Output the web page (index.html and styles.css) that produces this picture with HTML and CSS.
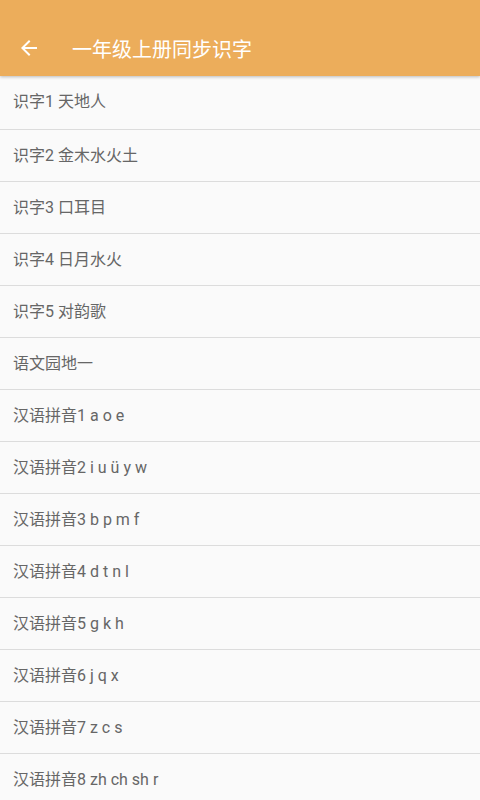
FILE: index.html
```html
<!DOCTYPE html>
<html lang="zh-CN">
<head>
    <meta charset="UTF-8">
    <meta name="viewport" content="width=device-width, initial-scale=1.0">
    <title>一年级上册同步识字</title>
    <link rel="stylesheet" href="styles.css">
</head>
<body>
    <div class="toolbar">
        <svg class="back-icon" viewBox="0 0 24 24" width="24" height="24">
            <path d="M20 11H7.83l5.59-5.59L12 4l-8 8 8 8 1.41-1.41L7.83 13H20v-2z" fill="#fff"/>
        </svg>
        <h1 class="title">一年级上册同步识字</h1>
    </div>
    <ul class="lesson-list">
        <li class="lesson">识字1 天地人</li>
        <li class="lesson">识字2 金木水火土</li>
        <li class="lesson">识字3 口耳目</li>
        <li class="lesson">识字4 日月水火</li>
        <li class="lesson">识字5 对韵歌</li>
        <li class="lesson">语文园地一</li>
        <li class="lesson">汉语拼音1 a o e</li>
        <li class="lesson">汉语拼音2 i u ü y w</li>
        <li class="lesson">汉语拼音3 b p m f</li>
        <li class="lesson">汉语拼音4 d t n l</li>
        <li class="lesson">汉语拼音5 g k h</li>
        <li class="lesson">汉语拼音6 j q x</li>
        <li class="lesson">汉语拼音7 z c s</li>
        <li class="lesson">汉语拼音8 zh ch sh r</li>
    </ul>
</body>
</html>
```

FILE: styles.css
```css
body {
    margin: 0;
    padding: 0;
    background-color: #fafafa;
    font-family: Roboto, "Noto Sans CJK SC", sans-serif;
    overflow: hidden;
}
.toolbar {
    position: relative;
    z-index: 1;
    height: 56px;
    padding-top: 20px;
    display: flex;
    align-items: center;
    background-color: #ecad5b;
    box-shadow: 0 1px 3px rgba(0, 0, 0, 0.25);
}
.back-icon {
    margin-left: 17px;
    flex-shrink: 0;
}
.title {
    margin: 0 0 0 31px;
    font-size: 20px;
    font-weight: normal;
    color: #fff;
}
.lesson-list {
    list-style: none;
    margin: 0;
    padding: 0;
}
.lesson {
    height: 52px;
    line-height: 52px;
    padding-left: 13px;
    font-size: 16px;
    color: #666;
    border-bottom: 1px solid #dcdcdc;
    box-sizing: border-box;
}
.lesson:first-child {
    height: 54px;
    line-height: 52px;
}
```
